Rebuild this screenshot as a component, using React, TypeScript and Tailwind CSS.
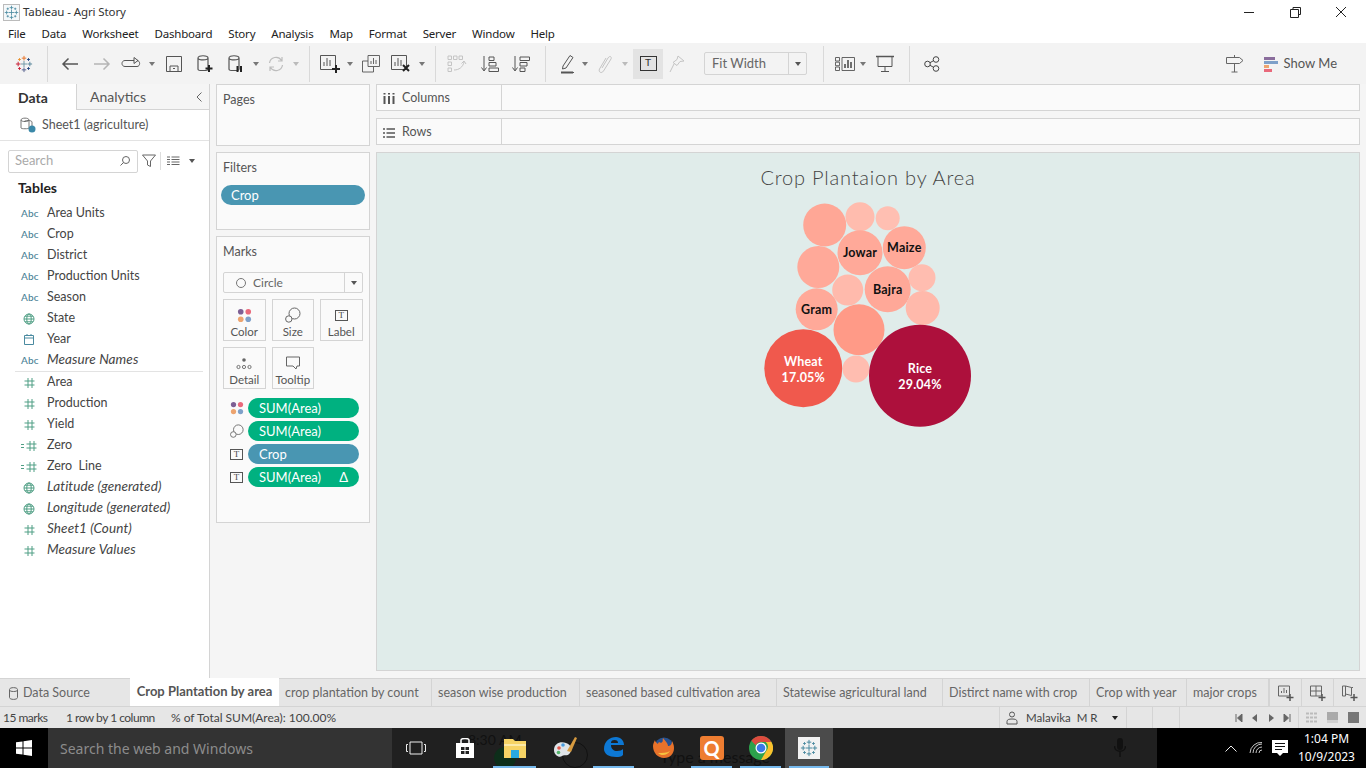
import React from "react";

const line = { fill: "none", stroke: "#555", strokeWidth: 1.2 };

const Svg = ({ w = 20, h = 20, children }: { w?: number; h?: number; children: React.ReactNode }) => (
  <svg width={w} height={h} viewBox={`0 0 ${w} ${h}`}>
    {children}
  </svg>
);

const Caret = ({ color = "#777" }: { color?: string }) => (
  <svg width="6" height="4" viewBox="0 0 6 4">
    <path d="M0 0h6L3 4z" fill={color} />
  </svg>
);

const Sep = ({ ml = "" }: { ml?: string }) => <div className={`w-px h-[36px] bg-[#d9d9d9] shrink-0 ${ml}`} />;

const Tool = ({ w, ml = "", children }: { w: string; ml?: string; children: React.ReactNode }) => (
  <div className={`flex items-center justify-center shrink-0 ${w} ${ml}`}>{children}</div>
);

// center, four sides and four small diagonal crosses
const crosses = [
  { x: 10, y: 10, a: 3.5, c: "#7099a6" },
  { x: 10, y: 3.5, a: 2.5, c: "#e8762d" },
  { x: 10, y: 16.5, a: 2.5, c: "#5b6591" },
  { x: 3.5, y: 10, a: 2.5, c: "#c72037" },
  { x: 16.5, y: 10, a: 2.5, c: "#59879b" },
  { x: 5, y: 5, a: 1.5, c: "#eb912b" },
  { x: 15, y: 5, a: 1.5, c: "#1f447e" },
  { x: 5, y: 15, a: 1.5, c: "#c72037" },
  { x: 15, y: 15, a: 1.5, c: "#1f447e" },
];

const TableauLogo = ({ size = 18, color }: { size?: number; color?: string }) => (
  <svg width={size} height={size} viewBox="0 0 20 20">
    {crosses.map((k, i) => (
      <path key={i} d={`M${k.x} ${k.y - k.a}v${k.a * 2}M${k.x - k.a} ${k.y}h${k.a * 2}`} stroke={color ?? k.c} strokeWidth="1.1" fill="none" />
    ))}
  </svg>
);

const DataCyl = () => <path d="M2 4c0-3 10-3 10 0v11c0 1-1 1.5-2 1.5H4c-1 0-2-.5-2-1.5zM2 4c0 2.5 10 2.5 10 0" {...line} />;

const Hash = ({ dash = false }: { dash?: boolean }) => (
  <svg width="16" height="12" viewBox="0 0 16 12">
    <path d="M7 1v10M11 1v10M3.500 4h10M3.500 8h10" stroke="#4f9e84" strokeWidth="1" fill="none" transform={dash ? "translate(2 0)" : ""} />
    {dash && <path d="M0 4.500h3M0 7.500h3" stroke="#4f9e84" strokeWidth="1" />}
  </svg>
);

const Globe = () => (
  <svg width="16" height="12" viewBox="0 0 16 12">
    <g stroke="#4f9e84" strokeWidth="1" fill="none">
      <circle cx="8" cy="6" r="5" />
      <ellipse cx="8" cy="6" rx="2.200" ry="5" />
      <path d="M3 6h10M4 3.200h8M4 8.800h8" />
    </g>
  </svg>
);

const Calendar = () => (
  <svg width="16" height="12" viewBox="0 0 16 12">
    <path d="M3.500 1.500h9v9h-9zM3.500 4h9M6 0v2M10 0v2" stroke="#4a8aa0" strokeWidth="1" fill="none" />
  </svg>
);

const Abc = () => <span className="text-[10px] text-[#4a7f96] font-medium tracking-[0.2px]">Abc</span>;

const ColorDots = ({ size = 16 }: { size?: number }) => (
  <svg width={size} height={size} viewBox="0 0 16 16">
    <circle cx="4" cy="4" r="3" fill="#7d5f94" />
    <circle cx="12" cy="4" r="3" fill="#e9697b" />
    <circle cx="4" cy="12" r="3" fill="#eda46f" />
    <circle cx="12" cy="12" r="3" fill="#7ea0c9" />
  </svg>
);

const SizeIcon = ({ size = 16 }: { size?: number }) => (
  <svg width={size} height={size} viewBox="0 0 16 16">
    <g fill="none" stroke="#666" strokeWidth="1">
      <circle cx="9.500" cy="6.500" r="5.500" />
      <circle cx="3.800" cy="12" r="3.200" fill="#fafafa" />
    </g>
  </svg>
);

const LabelIcon = () => (
  <div className="w-[13px] h-[11px] border border-[#555] flex items-center justify-center text-[9px] leading-none text-[#444] font-['Liberation_Serif',serif]">
    T
  </div>
);

const DetailIcon = () => (
  <svg width="16" height="16" viewBox="0 0 16 16">
    <circle cx="8" cy="5" r="1.800" fill="#666" />
    <g fill="none" stroke="#666" strokeWidth="0.900">
      <circle cx="2.500" cy="12" r="1.600" />
      <circle cx="8" cy="12" r="1.600" />
      <circle cx="13.500" cy="12" r="1.600" />
    </g>
  </svg>
);

const TooltipIcon = () => (
  <svg width="16" height="16" viewBox="0 0 16 16">
    <path d="M1.500 2h13v9h-2.500l-1 3-3-3h-6.500z" fill="none" stroke="#666" strokeWidth="1" />
  </svg>
);

const fields = [
  { name: "Area Units", icon: <Abc /> },
  { name: "Crop", icon: <Abc /> },
  { name: "District", icon: <Abc /> },
  { name: "Production Units", icon: <Abc /> },
  { name: "Season", icon: <Abc /> },
  { name: "State", icon: <Globe /> },
  { name: "Year", icon: <Calendar /> },
  { name: "Measure Names", icon: <Abc />, italic: true },
];

const measures = [
  { name: "Area", icon: <Hash /> },
  { name: "Production", icon: <Hash /> },
  { name: "Yield", icon: <Hash /> },
  { name: "Zero", icon: <Hash dash /> },
  { name: "Zero  Line", icon: <Hash dash /> },
  { name: "Latitude (generated)", icon: <Globe />, italic: true },
  { name: "Longitude (generated)", icon: <Globe />, italic: true },
  { name: "Sheet1 (Count)", icon: <Hash />, italic: true },
  { name: "Measure Values", icon: <Hash />, italic: true },
];

const FieldRow = ({ name, icon, italic }: { name: string; icon: React.ReactNode; italic?: boolean }) => (
  <div className="flex items-center h-[21px]">
    <div className="w-[47px] pl-[21px] flex items-center shrink-0">{icon}</div>
    <span className={`text-[#444] whitespace-pre ${italic ? "italic text-[13.500px] tracking-[0.1px] -mt-[2px]" : "text-[12.500px]"}`}>{name}</span>
  </div>
);

const MarkButton = ({ label, children }: { label: string; children: React.ReactNode }) => (
  <div className="w-[42.500px] h-[42px] border border-[#d4d4d4] flex flex-col items-center pt-[6px] shrink-0">
    <div className="h-[18px] flex items-center">{children}</div>
    <span className="text-[11.500px] leading-[14px] text-[#555] mt-[1px]">{label}</span>
  </div>
);

const MarkPill = ({ icon, label, color, delta }: { icon: React.ReactNode; label: string; color: string; delta?: boolean }) => (
  <div className="flex items-center h-[20px]">
    <div className="w-[31px] pl-[13px] flex items-center shrink-0">{icon}</div>
    <div className={`w-[111px] h-[20px] rounded-full flex items-center pl-[11px] pr-[11px] pt-[1px] justify-between text-white text-[13px] ${color}`}>
      <span>{label}</span>
      {delta && <span className="text-[13px]">Δ</span>}
    </div>
  </div>
);

const bubbles = [
  { x: 824.7, y: 224, r: 21.5, c: "#ffa796" },
  { x: 860, y: 215.7, r: 14.5, c: "#ffbcae" },
  { x: 887.7, y: 217.3, r: 12, c: "#ffbfb2" },
  { x: 860, y: 251.7, r: 22.5, c: "#ffa999", t: ["Jowar"] },
  { x: 904.3, y: 246.7, r: 21.5, c: "#ffa999", t: ["Maize"] },
  { x: 818.3, y: 266, r: 21, c: "#ffa999" },
  { x: 922, y: 276.7, r: 13.5, c: "#ffbdb0" },
  { x: 847.7, y: 289, r: 15.5, c: "#ffbaac" },
  { x: 887.7, y: 288.3, r: 23, c: "#ffa898", t: ["Bajra"] },
  { x: 922.7, y: 307, r: 17, c: "#ffb9ab" },
  { x: 816.7, y: 308.3, r: 21, c: "#ffa999", t: ["Gram"] },
  { x: 859, y: 328.7, r: 25.5, c: "#ff9a87" },
  { x: 803.3, y: 367.3, r: 39, c: "#f0594d", t: ["Wheat", "17.05%"], light: true },
  { x: 856, y: 368, r: 13.5, c: "#ffbdb0" },
  { x: 920, y: 374.7, r: 51, c: "#ad103c", t: ["Rice", "29.04%"], light: true },
];

// chart is placed relative to the view panel, which starts at 377,152
const BubbleChart = () => (
  <svg width="981" height="517" viewBox="377 152 981 517" className="block">
    <text x="868" y="184" textAnchor="middle" fontSize="20" fontWeight="300" fill="#444" letterSpacing="0.8">
      Crop Plantaion by Area
    </text>
    {bubbles.map((b, i) => (
      <circle key={i} cx={b.x} cy={b.y} r={b.r} fill={b.c} />
    ))}
    {bubbles.map((b, i) =>
      b.t
        ? b.t.map((line, j) => (
            <text
              key={`${i}-${j}`}
              x={b.x}
              y={b.y + (b.t!.length === 2 ? (j === 0 ? -2.500 : 13.500) : 4.500)}
              textAnchor="middle"
              fontSize="12.500"
              fontWeight="700"
              letterSpacing="0.2"
              fill={b.light ? "#fff" : "#111"}
            >
              {line}
            </text>
          ))
        : null
    )}
  </svg>
);

const tabs = [
  { name: "crop plantation by count", w: "w-[153px]" },
  { name: "season wise production", w: "w-[148px]" },
  { name: "seasoned based cultivation area", w: "w-[197px]" },
  { name: "Statewise agricultural land", w: "w-[166px]" },
  { name: "Distirct name with crop", w: "w-[147px]" },
  { name: "Crop with year", w: "w-[97px]" },
  { name: "major crops", w: "w-[82px]" },
];

const Underline = () => <div className="absolute left-[4px] right-[4px] bottom-0 h-[2px] bg-[#76b9ed]" />;

const TaskIcon = ({ w = "w-[49px]", active, running, children }: { w?: string; active?: boolean; running?: boolean; children: React.ReactNode }) => (
  <div className={`relative h-full flex items-center justify-center shrink-0 ${w} ${active ? "bg-[#4b4b4b]" : ""}`}>
    {children}
    {running && <Underline />}
  </div>
);

export default function App() {
  return (
    <div className="w-[1366px] h-[768px] overflow-hidden flex flex-col bg-white font-['Lato',sans-serif] text-[#444]">
      {/* Title bar */}
      <div className="h-[23px] pt-[1px] flex items-center shrink-0">
        <div className="w-[23px] pl-[3px] flex items-center">
          <div className="border border-[#bbb] bg-[#f4f8fa]">
            <TableauLogo size={15} color="#4a8aa0" />
          </div>
        </div>
        <span className="text-[11.500px] tracking-[-0.1px] font-['Noto_Sans',sans-serif] text-[#333]">Tableau - Agri Story</span>
        <div className="ml-auto mr-[2px] flex items-center text-[#222]">
          <div className="w-[46px] flex justify-center">
            <div className="w-[10px] h-px bg-[#222]" />
          </div>
          <div className="w-[46px] flex justify-center">
            <svg width="11" height="11" viewBox="0 0 11 11">
              <path d="M3 2.500V.5h7.500v7H8.500M.5 2.500h8v8h-8z" fill="none" stroke="#222" />
            </svg>
          </div>
          <div className="w-[46px] flex justify-center">
            <svg width="12" height="12" viewBox="0 0 12 12">
              <path d="M1 1l10 10M11 1L1 11" stroke="#222" />
            </svg>
          </div>
        </div>
      </div>

      {/* Menu bar */}
      <div className="h-[20px] pt-[1px] flex items-center pl-[8px] gap-[16px] text-[11.500px] tracking-[-0.2px] font-['Noto_Sans',sans-serif] text-[#222] shrink-0">
        <span>File</span>
        <span>Data</span>
        <span>Worksheet</span>
        <span>Dashboard</span>
        <span>Story</span>
        <span>Analysis</span>
        <span>Map</span>
        <span>Format</span>
        <span>Server</span>
        <span>Window</span>
        <span>Help</span>
      </div>

      {/* Toolbar */}
      <div className="h-[41px] bg-[#f3f3f3] flex items-center shrink-0">
        <Tool w="w-[47px]"><TableauLogo /></Tool>
        <Sep />
        <Tool w="w-[32px]" ml="ml-[6px]">
          <svg width="18" height="14" viewBox="0 0 18 14"><path d="M17 7H2M7.500 1.500L2 7l5.500 5.500" fill="none" stroke="#555" strokeWidth="1.500" /></svg>
        </Tool>
        <Tool w="w-[32px]">
          <svg width="18" height="14" viewBox="0 0 18 14"><path d="M1 7h15M10.500 1.500L16 7l-5.500 5.500" fill="none" stroke="#b5b5b5" strokeWidth="1.500" /></svg>
        </Tool>
        <Tool w="w-[26px]">
          <svg width="20" height="14" viewBox="0 0 20 14"><path d="M13 3.500H4c-4 0-4 6 0 6h12c3.500 0 3.500-6 0-6M13 0.500v6l4-3z" fill="none" stroke="#555" /></svg>
        </Tool>
        <Tool w="w-[16px]"><Caret /></Tool>
        <Tool w="w-[28px]">
          <svg width="16" height="16" viewBox="0 0 16 16"><path d="M.5.5h15v15H.5zM4 15.500V10h8v5.500M7 12.500h2" fill="none" stroke="#555" /></svg>
        </Tool>
        <Tool w="w-[34px]">
          <Svg w={18} h={20}><DataCyl /><path d="M13 11v7M9.500 14.500h7" stroke="#222" strokeWidth="2" /></Svg>
        </Tool>
        <Tool w="w-[28px]">
          <Svg w={18} h={20}><DataCyl /><path d="M10.500 12v6M14 12v6" stroke="#222" strokeWidth="2" /></Svg>
        </Tool>
        <Tool w="w-[12px]"><Caret /></Tool>
        <Tool w="w-[28px]">
          <svg width="18" height="18" viewBox="0 0 18 18"><path d="M2.500 8a6.500 6.500 0 0 1 12-2.500M15.500 10a6.500 6.500 0 0 1-12 2.500M15 2v4h-4M3 16v-4h4" fill="none" stroke="#bdbdbd" strokeWidth="1.200" /></svg>
        </Tool>
        <Tool w="w-[12px]"><Caret color="#bbb" /></Tool>
        <Sep ml="ml-[7px]" />
        <Tool w="w-[30px]" ml="ml-[6px]">
          <svg width="22" height="20" viewBox="0 0 22 20"><path d="M.5 1.500h15v14H.5zM4 12V8M7 12V4M10 12V6" fill="none" stroke="#555" /><path d="M16 11v8M12 15h8" stroke="#222" strokeWidth="2" /></svg>
        </Tool>
        <Tool w="w-[8px]"><Caret /></Tool>
        <Tool w="w-[34px]">
          <svg width="18" height="18" viewBox="0 0 18 18"><path d="M6 .5h11.500v11H6zM9 9V6M11.500 9V3M14 9V5M6 6H.5v11h11v-5" fill="none" stroke="#555" strokeWidth="0.900" /></svg>
        </Tool>
        <Tool w="w-[28px]">
          <svg width="22" height="20" viewBox="0 0 22 20"><path d="M.5 1.500h15v14H.5zM4 12V8M7 12V4M10 12V6" fill="none" stroke="#555" /><path d="M12 11l6 6M18 11l-6 6" stroke="#222" strokeWidth="2" /></svg>
        </Tool>
        <Tool w="w-[12px]"><Caret /></Tool>
        <Sep ml="ml-[7px]" />
        <Tool w="w-[42px]">
          <svg width="20" height="18" viewBox="0 0 20 18"><path d="M1 1h3.500v3.500H1zM6.500 1H10v3.500H6.500zM12 1h3.500v3.500H12zM1 7h3.500v3.500H1zM1 13h3.500v3.500H1zM7 15c5 0 9-3 10-8M14.500 8.500L17 6l2 3" fill="none" stroke="#c4c4c4" /></svg>
        </Tool>
        <Tool w="w-[24px]">
          <svg width="18" height="18" viewBox="0 0 18 18"><path d="M3 1v14M.5 12.500L3 16l2.500-3.500" fill="none" stroke="#555" /><path d="M8 2h5v3.500H8zM8 7.500h7V11H8zM8 13h9.500v3.500H8z" fill="none" stroke="#555" /></svg>
        </Tool>
        <Tool w="w-[38px]">
          <svg width="18" height="18" viewBox="0 0 18 18"><path d="M3 1v14M.5 12.500L3 16l2.500-3.500" fill="none" stroke="#555" /><path d="M8 2h9.500v3.500H8zM8 7.500h7V11H8zM8 13h5v3.500H8z" fill="none" stroke="#555" /></svg>
        </Tool>
        <Sep ml="ml-[5px]" />
        <Tool w="w-[28px]" ml="ml-[8px]">
          <svg width="16" height="20" viewBox="0 0 16 20"><path d="M3 12L10 1.500l3 2L6 14l-3.500 1zM2 18.500h12" fill="none" stroke="#555" /><path d="M1 18.500h12" stroke="#555" strokeWidth="2" /></svg>
        </Tool>
        <Tool w="w-[6px]"><Caret /></Tool>
        <Tool w="w-[34px]">
          <svg width="14" height="20" viewBox="0 0 14 20"><path d="M4 14l6-10c2-3 4 -1 3 1L5.500 17c-2 3-5.500 1-4-2L8 4" fill="none" stroke="#c4c4c4" /></svg>
        </Tool>
        <Tool w="w-[6px]"><Caret color="#bbb" /></Tool>
        <Tool w="w-[30px]" ml="ml-[5px]">
          <div className="w-[30px] h-[30px] bg-[#e3e3e3] flex items-center justify-center">
            <div className="w-[17px] h-[15px] border border-[#333] flex items-center justify-center text-[11px] leading-none text-[#333] font-['Liberation_Mono',monospace]">T</div>
          </div>
        </Tool>
        <Tool w="w-[28px]">
          <svg width="16" height="18" viewBox="0 0 16 18"><path d="M9 1l6 5-4 .5-3 4-4-3 4-3zM5 9l-4 8" fill="none" stroke="#c4c4c4" /></svg>
        </Tool>
        <div className="ml-[13px] w-[103px] h-[23px] border border-[#d4d4d4] rounded-[2px] flex items-center shrink-0">
          <span className="flex-1 pl-[7px] text-[13px] text-[#666]">Fit Width</span>
          <div className="w-[18px] h-full border-l border-[#d4d4d4] flex items-center justify-center"><Caret color="#555" /></div>
        </div>
        <Sep ml="ml-[16px]" />
        <Tool w="w-[30px]" ml="ml-[6px]">
          <svg width="20" height="14" viewBox="0 0 20 14"><path d="M.5.5h4v3.500h-4zM.5 5.200h4v3.500h-4zM.5 10h4v3.500h-4zM7 .5h12.500v13H7z" fill="none" stroke="#555" strokeWidth="0.900" /><path d="M10 11V7M13 11V3M16 11V5" stroke="#444" strokeWidth="1.500" /></svg>
        </Tool>
        <Tool w="w-[6px]"><Caret /></Tool>
        <Tool w="w-[38px]">
          <svg width="18" height="18" viewBox="0 0 18 18"><path d="M0 1.500h18" stroke="#555" strokeWidth="1.500" /><path d="M2 2v9.500h14V2M9 11.500v5M5 16.500h8" fill="none" stroke="#555" /></svg>
        </Tool>
        <Sep ml="ml-[5px]" />
        <Tool w="w-[44px]">
          <svg width="16" height="16" viewBox="0 0 16 16"><g fill="none" stroke="#444"><circle cx="3.500" cy="8" r="2.800" /><circle cx="12" cy="3.500" r="2.800" /><circle cx="12" cy="12.500" r="2.800" /><path d="M6 6.700l3.500-2M6 9.300l3.500 2" /></g></svg>
        </Tool>
        <Tool w="w-[30px]" ml="ml-auto">
          <svg width="18" height="19" viewBox="0 0 18 19"><path d="M.5 3.500h13L17 6.500l-3.500 3H.5zM8.500 1v2.500M8.500 9.500V18M5.500 18h6" fill="none" stroke="#666" /></svg>
        </Tool>
        <div className="ml-[14px] mr-[29px] flex items-center gap-[6px] shrink-0">
          <svg width="14" height="16" viewBox="0 0 14 16">
            <rect x="0" y="1" width="11" height="3" fill="#8a6d9c" />
            <rect x="0" y="5" width="14" height="3" fill="#7ea0c9" />
            <rect x="0" y="9" width="5" height="3" fill="#eda46f" />
            <rect x="0" y="13" width="8" height="3" fill="#e9697b" />
          </svg>
          <span className="text-[13px] text-[#555]">Show Me</span>
        </div>
      </div>

      {/* Main area */}
      <div className="flex-1 flex min-h-0 bg-[#f5f5f5]">
        {/* Data pane */}
        <div className="w-[210px] shrink-0 bg-white border-r border-[#d4d4d4] flex flex-col">
          <div className="h-[26px] flex items-stretch shrink-0">
            <div className="w-[77px] pl-[18px] flex items-center text-[14px] font-bold text-[#333] border-r border-[#d4d4d4]">Data</div>
            <div className="flex-1 bg-[#f5f5f5] border-b border-[#d4d4d4] flex items-center justify-between pl-[13px] pr-[7px] text-[14px] text-[#555]">
              <span>Analytics</span>
              <svg width="6" height="10" viewBox="0 0 6 10"><path d="M5.500.5L1 5l4.500 4.500" fill="none" stroke="#666" /></svg>
            </div>
          </div>
          <div className="h-[31px] border-b border-[#e3e3e3] flex items-center pl-[20px] gap-[6px] shrink-0">
            <svg width="16" height="16" viewBox="0 0 16 16">
              <path d="M1 3c0-2.500 8-2.500 8 0v8c0 1-8 1-8 0zM1 3c0 2 8 2 8 0M4 5c0-2 8-2 8 0v4" fill="none" stroke="#666" strokeWidth="0.900" />
              <circle cx="12" cy="12" r="3.500" fill="#3a88a8" />
            </svg>
            <span className="text-[12.500px] text-[#555]">Sheet1 (agriculture)</span>
          </div>
          <div className="h-[22px] mt-[9px] flex items-center pl-[8px] shrink-0">
            <div className="w-[130px] h-[23px] border border-[#d4d4d4] rounded-[2px] flex items-center justify-between px-[6px]">
              <span className="text-[13px] text-[#aaa]">Search</span>
              <svg width="12" height="12" viewBox="0 0 12 12"><circle cx="7" cy="5" r="3.500" fill="none" stroke="#666" /><path d="M4.500 7.500L1.500 10.500" stroke="#666" /></svg>
            </div>
            <svg className="ml-[4px]" width="14" height="14" viewBox="0 0 14 14"><path d="M.5 1h13L8.500 7v5.500l-3-1.500V7z" fill="none" stroke="#666" /></svg>
            <div className="w-px h-[18px] bg-[#ddd] ml-[4px]" />
            <svg className="ml-[6px]" width="13" height="10" viewBox="0 0 13 10"><path d="M0 1h3M0 3.500h3M0 6h3M0 8.500h3M4.500 1h8M4.500 3.500h8M4.500 6h8M4.500 8.500h8" stroke="#666" /></svg>
            <div className="ml-[9px]"><Caret color="#555" /></div>
          </div>
          <div className="mt-[6px] pl-[18px] h-[18px] text-[14px] font-bold text-[#222] flex items-center shrink-0">Tables</div>
          <div className="mt-[7px] flex flex-col">
            {fields.map((f) => (
              <FieldRow key={f.name} {...f} />
            ))}
          </div>
          <div className="ml-[15px] mr-[6px] h-px bg-[#e3e3e3]" />
          <div className="flex flex-col">
            {measures.map((f) => (
              <FieldRow key={f.name} {...f} />
            ))}
          </div>
        </div>

        {/* Shelves column */}
        <div className="w-[154px] ml-[6px] shrink-0 flex flex-col">
          <div className="h-[62px] bg-[#fafafa] border border-[#d4d4d4] pl-[6px] pt-[6px] text-[12.500px] text-[#555]">Pages</div>
          <div className="h-[78px] mt-[6px] bg-[#fafafa] border border-[#d4d4d4] px-[4px] pt-[7px]">
            <div className="text-[12.500px] text-[#555] pl-[2px] leading-[16px]">Filters</div>
            <div className="mt-[9px] h-[20px] rounded-full bg-[#4996b2] text-white text-[13px] flex items-center pl-[10px] pt-[1px]">Crop</div>
          </div>
          <div className="h-[287px] mt-[6px] bg-[#fafafa] border border-[#d4d4d4] pt-[7px]">
            <div className="text-[12.500px] text-[#555] pl-[6px] leading-[16px]">Marks</div>
            <div className="ml-[6px] mt-[12px] w-[140px] h-[21px] border border-[#d4d4d4] rounded-[2px] flex items-center">
              <div className="flex-1 flex items-center pl-[12px] gap-[7px]">
                <div className="w-[10px] h-[10px] rounded-full border border-[#777]" />
                <span className="text-[12px] text-[#666]">Circle</span>
              </div>
              <div className="w-[18px] h-full border-l border-[#d4d4d4] flex items-center justify-center"><Caret color="#555" /></div>
            </div>
            <div className="ml-[6px] mt-[6px] flex gap-[6px]">
              <MarkButton label="Color"><ColorDots size={15} /></MarkButton>
              <MarkButton label="Size"><SizeIcon /></MarkButton>
              <MarkButton label="Label"><LabelIcon /></MarkButton>
            </div>
            <div className="ml-[6px] mt-[6px] flex gap-[6px]">
              <MarkButton label="Detail"><DetailIcon /></MarkButton>
              <MarkButton label="Tooltip"><TooltipIcon /></MarkButton>
            </div>
            <div className="mt-[9px] flex flex-col gap-[3px]">
              <MarkPill icon={<ColorDots size={14} />} label="SUM(Area)" color="bg-[#00b180]" />
              <MarkPill icon={<SizeIcon size={14} />} label="SUM(Area)" color="bg-[#00b180]" />
              <MarkPill icon={<LabelIcon />} label="Crop" color="bg-[#4996b2]" />
              <MarkPill icon={<LabelIcon />} label="SUM(Area)" color="bg-[#00b180]" delta />
            </div>
          </div>
        </div>

        {/* Worksheet */}
        <div className="w-[984px] ml-[6px] shrink-0 flex flex-col">
          <div className="h-[27px] bg-[#fafafa] border border-[#d4d4d4] flex items-stretch">
            <div className="w-[125px] border-r border-[#d4d4d4] flex items-center pl-[6px] pt-[2px] gap-[7px] text-[12.500px] text-[#555]">
              <svg width="12" height="12" viewBox="0 0 12 12"><path d="M1.500 3v8M6 3v8M10.500 3v8" stroke="#555" strokeWidth="2" /><path d="M1.500 0v1.500M6 0v1.500M10.500 0v1.500" stroke="#555" strokeWidth="2" /></svg>
              Columns
            </div>
          </div>
          <div className="h-[27px] mt-[7px] bg-[#fafafa] border border-[#d4d4d4] flex items-stretch">
            <div className="w-[125px] border-r border-[#d4d4d4] flex items-center pl-[6px] pt-[2px] gap-[7px] text-[12.500px] text-[#555]">
              <svg width="12" height="10" viewBox="0 0 12 10"><path d="M0 1h2M3.500 1H12M0 5h2M3.500 5H12M0 9h2M3.500 9H12" stroke="#555" strokeWidth="1.500" /></svg>
              Rows
            </div>
          </div>
          <div className="h-[519px] mt-[7px] bg-[#e0ecea] border border-[#d4d4d4]">
            <BubbleChart />
          </div>
        </div>
      </div>

      {/* Sheet tabs */}
      <div className="h-[29px] flex bg-[#e6e6e6] border-t border-[#d4d4d4] border-b shrink-0 text-[12.500px] text-[#666]">
        <div className="w-[130px] flex items-center pl-[9px] gap-[5px] shrink-0 pt-[1px]">
          <svg width="9" height="13" viewBox="0 0 9 13"><path d="M.5 2.500c0-2.500 8-2.500 8 0v8c0 2.500-8 2.500-8 0zM.5 3c0 2 8 2 8 0" fill="none" stroke="#666" /></svg>
          Data Source
        </div>
        <div className="w-[149px] bg-white flex items-center justify-center font-bold text-[13px] text-[#555] -mt-px shrink-0 pb-[1px]">Crop Plantation by area</div>
        {tabs.map((t) => (
          <div key={t.name} className={`${t.w} border-r border-[#d4d4d4] flex items-center pl-[6px] shrink-0 whitespace-nowrap pt-[1px]`}>
            {t.name}
          </div>
        ))}
        <div className="w-[32px] flex items-center justify-center border-l border-[#d4d4d4] shrink-0">
          <svg width="16" height="16" viewBox="0 0 16 16"><path d="M.5 1h11v10H.5zM3.500 8V6M6 8V3M8.500 8V5" fill="none" stroke="#666" /><path d="M12 9v7M8.500 12.500h7" stroke="#555" strokeWidth="1.500" /></svg>
        </div>
        <div className="w-[32px] flex items-center justify-center border-l border-[#d4d4d4] shrink-0">
          <svg width="16" height="16" viewBox="0 0 16 16"><path d="M.5 1h11v10H.5zM6 1v10M.5 6h11" fill="none" stroke="#666" /><path d="M12 9v7M8.500 12.500h7" stroke="#555" strokeWidth="1.500" /></svg>
        </div>
        <div className="w-[33px] flex items-center justify-center border-l border-[#d4d4d4] shrink-0">
          <svg width="16" height="16" viewBox="0 0 16 16"><path d="M.5 1h3v10h-3zM3.500 1l6 1.500v8l-6-1.500M9.500 2.500H11" fill="none" stroke="#666" /><path d="M12 9v7M8.500 12.500h7" stroke="#555" strokeWidth="1.500" /></svg>
        </div>
      </div>

      {/* Status bar */}
      <div className="h-[21px] bg-[#e6e6e6] flex items-stretch shrink-0 text-[12px] text-[#444]">
        <div className="w-[63px] ml-[3px] tracking-[-0.5px] flex items-center shrink-0">15 marks</div>
        <div className="w-[105px] tracking-[-0.5px] flex items-center shrink-0">1 row by 1 column</div>
        <div className="w-[828px] flex items-center shrink-0">% of Total SUM(Area): 100.00%</div>
        <div className="w-[128px] border-l border-r border-[#d4d4d4] flex items-center pl-[6px] shrink-0">
          <svg width="12" height="14" viewBox="0 0 12 14"><circle cx="6" cy="3.500" r="2.500" fill="none" stroke="#555" /><path d="M1 13v-2.500C1 8.500 3 8 6 8s5 .5 5 2.500V13z" fill="none" stroke="#555" /></svg>
          <span className="ml-[8px] w-[86px] whitespace-pre text-[11.500px]">Malavika  M R</span>
          <Caret color="#222" />
        </div>
        <div className="w-[26px] border-r border-[#d4d4d4] shrink-0" />
        <div className="w-[27px] border-r border-[#d4d4d4] shrink-0" />
        <div className="w-[118px] flex items-center pl-[55px] gap-[8px] shrink-0">
          <svg width="8" height="8" viewBox="0 0 8 8"><path d="M1 0v8M7 0v8L2.500 4z" stroke="#666" fill="#666" /></svg>
          <svg width="8" height="8" viewBox="0 0 8 8"><path d="M6 0v8L1 4z" fill="#666" /></svg>
          <svg width="8" height="8" viewBox="0 0 8 8"><path d="M2 0v8l5-4z" fill="#666" /></svg>
          <svg width="8" height="8" viewBox="0 0 8 8"><path d="M7 0v8M1 0v8l4.500-4z" stroke="#666" fill="#666" /></svg>
        </div>
        <div className="flex-1 border-l border-[#d4d4d4] flex items-center pl-[7px] gap-[10px] min-w-0">
          <svg width="11" height="11" viewBox="0 0 11 11"><path d="M0 1.500h11M0 5.500h11M0 9.500h11" stroke="#bbb" strokeWidth="2" strokeDasharray="3 1" /></svg>
          <div className="w-[11px] h-[11px] bg-[#aaa] border-b-[3px] border-[#d0d0d0]" />
          <div className="w-[11px] h-[11px] bg-[#777]" />
        </div>
      </div>

      {/* Taskbar */}
      <div className="h-[40px] relative flex items-stretch bg-[#202020] shrink-0 overflow-hidden">
        {/* dim image left behind under the taskbar, painted below the icons */}
        <span className="absolute left-[468px] top-[1px] text-[14px] text-[#111] whitespace-nowrap">8:30 AM</span>
        <span className="absolute left-[660px] top-[17px] text-[16px] text-[#111] whitespace-nowrap">Type a message</span>
        <div className="absolute left-[494px] top-[19px] w-[22px] h-[22px] rounded-full bg-[#0d2e1a]" />
        <div className="absolute left-[562px] top-[14px] w-[26px] h-[26px] rounded-full border border-[#111]" />
        <div className="w-[48px] bg-black flex items-center justify-center shrink-0">
          <svg width="16" height="16" viewBox="0 0 16 16"><path d="M0 2.300L6.500 1.400V7.500H0zM7.500 1.300L16 0V7.500H7.500zM0 8.500H6.500V14.600L0 13.700zM7.500 8.500H16V16L7.500 14.700z" fill="#fff" /></svg>
        </div>
        <div className="w-[344px] bg-[#333] flex items-center pl-[12px] text-[14px] text-[#8c8c8c] font-['Noto_Sans',sans-serif] shrink-0">Search the web and Windows</div>
        <TaskIcon w="w-[48px]">
          <svg width="20" height="14" viewBox="0 0 20 14"><path d="M4 1h12v12H4zM2 3.500H.5v7H2M18 3.500h1.500v7H18" fill="none" stroke="#eee" /></svg>
        </TaskIcon>
        <TaskIcon>
          <svg width="18" height="20" viewBox="0 0 18 20"><path d="M0 5h18v15H0z" fill="#fff" /><path d="M5 5V2c0-2 8-2 8 0v3" fill="none" stroke="#fff" strokeWidth="1.500" /><path d="M5 9h3.500v3H5zM9.500 9H13v3H9.500zM5 13h3.500v3H5zM9.500 13H13v3H9.500z" fill="#222" /></svg>
        </TaskIcon>
        <TaskIcon w="w-[51px]" running>
          <svg width="22" height="20" viewBox="0 0 22 20"><path d="M0 1h9l2 2h11v17H0z" fill="#f6d365" /><path d="M0 6h22v2H0z" fill="#fbe9a8" /><path d="M7 12h8v8H7z" fill="#29a8e0" /></svg>
        </TaskIcon>
        <TaskIcon>
          <svg width="26" height="24" viewBox="0 0 26 24"><path d="M2 14C2 7 9 5 14 7s7 6 4 10-6 1-8 3-8 0-8-6z" fill="#dfe4e8" /><circle cx="7" cy="12" r="1.800" fill="#e2574c" /><circle cx="11" cy="9" r="1.800" fill="#4a9de0" /><circle cx="6.500" cy="16.500" r="1.800" fill="#52b36a" /><path d="M15 15L23 1l2 1-6 14z" fill="#d79a3f" /></svg>
        </TaskIcon>
        <TaskIcon running>
          <svg width="22" height="24" viewBox="0 0 22 24"><path d="M1 13C1 5 7 1 13 1c5 0 8 4 8 8H8c0 4 3 6 6 6 3 0 5-1 6-2v6c-2 2-4 2-7 2-7 0-12-3-12-8zM8 7h7c0-2-1-3-3.500-3S8 5 8 7z" fill="#0d78d4" /></svg>
        </TaskIcon>
        <TaskIcon>
          <svg width="24" height="24" viewBox="0 0 24 24"><circle cx="13" cy="11" r="9.500" fill="#27518f" /><path d="M2 10c0 7 5 12 11 12s10-4 10-10c0-3-1-5-2-7 0 4-2 5-4 5 0-3-3-5-5-8-1 3 1 3-2 5-1-1-3-1-3 1-2-1-3-3-3-4-1 2-2 4-2 6z" fill="#e8722a" /><path d="M7 17c3 3 9 3 12-2-3 2-8 2-12 2z" fill="#f7c33f" /></svg>
        </TaskIcon>
        <TaskIcon running>
          <div className="w-[24px] h-[24px] rounded-[3px] bg-[#ee7d31] flex items-center justify-center text-white text-[20px] font-bold leading-none">Q</div>
        </TaskIcon>
        <TaskIcon running>
          <svg width="24" height="24" viewBox="0 0 24 24"><circle cx="12" cy="12" r="12" fill="#2ca24c" /><path d="M12 0a12 12 0 0 1 10.400 6H12a6 6 0 0 0-5.300 3.200L2.300 4.700A12 12 0 0 1 12 0z" fill="#dd4b3e" /><path d="M22.400 6A12 12 0 0 1 12 24l5.200-9a6 6 0 0 0-.5-9z" fill="#fbc02d" /><circle cx="12" cy="12" r="5.500" fill="#fff" /><circle cx="12" cy="12" r="4.300" fill="#3b78e7" /></svg>
        </TaskIcon>
        <TaskIcon w="w-[48px]" active running>
          <div className="w-[22px] h-[22px] bg-[#f2f2f2] flex items-center justify-center"><TableauLogo size={18} color="#4a8aa0" /></div>
        </TaskIcon>
        <div className="flex-1 flex items-center justify-center pl-[250px]">
          <svg width="12" height="20" viewBox="0 0 12 20"><rect x="3" y="0" width="6" height="12" rx="3" fill="#111" /><path d="M.5 8c0 7 11 7 11 0M6 14v5" fill="none" stroke="#111" strokeWidth="1.500" /></svg>
        </div>
        <div className="w-[209px] bg-black flex items-center shrink-0 pl-[68px] relative">
          <svg width="12" height="7" viewBox="0 0 12 7"><path d="M.5 6.500L6 1l5.500 5.500" fill="none" stroke="#eee" /></svg>
          <svg className="ml-[12px]" width="14" height="12" viewBox="0 0 14 12"><path d="M13 8A3 3 0 0 0 10 11M13 5A6 6 0 0 0 7 11M13 2A9 9 0 0 0 4 11M13 .5A11 11 0 0 0 1 11" fill="none" stroke="#ddd" strokeWidth="0.900" /></svg>
          <svg className="ml-[9px]" width="16" height="17" viewBox="0 0 16 17"><path d="M0 0h16v13h-5l-3 3-3-3H0z" fill="#fff" /><path d="M3 3.500h10M3 6.500h10M3 9.500h7" stroke="#111" /></svg>
          <div className="ml-[10px] flex flex-col items-center text-[12px] leading-[18px] text-white font-['Noto_Sans',sans-serif] whitespace-nowrap">
            <span>1:04 PM</span>
            <span>10/9/2023</span>
          </div>
        </div>
      </div>
    </div>
  );
}
